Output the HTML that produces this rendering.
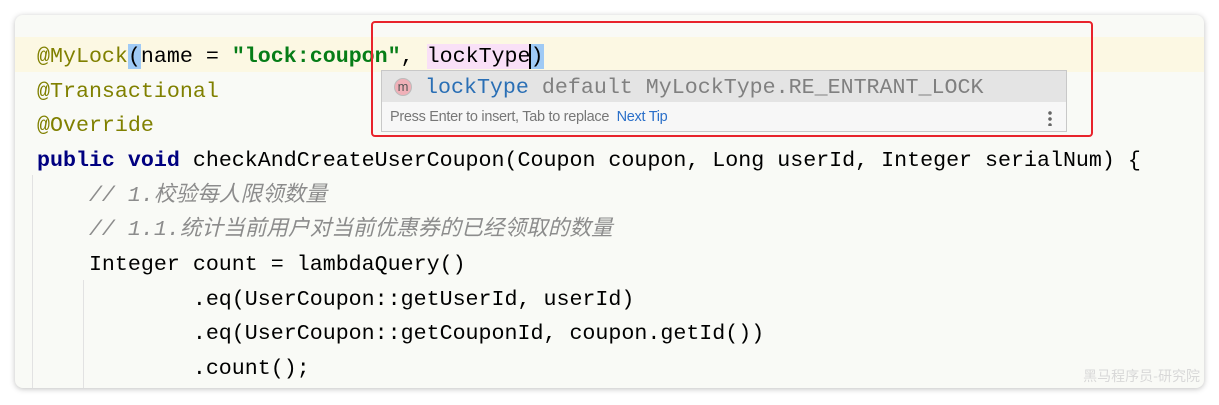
<!DOCTYPE html>
<html><head><meta charset="utf-8"><style>
body{margin:0;width:1219px;height:405px;background:#fff;overflow:hidden;position:relative}
.card{position:absolute;left:15px;top:15px;width:1189px;height:373px;background:#f9faf6;border-radius:8px;box-shadow:0 1px 6px rgba(0,0,0,.25);overflow:hidden}
.hl{position:absolute;left:0;top:22px;width:100%;height:35px;background:#fcf8e3}
.ln{position:absolute;left:22px;font:21.65px/34px "Liberation Mono","Noto Sans CJK SC",monospace;white-space:pre;color:#000}
.an{color:#808000}.kw{color:#000080;font-weight:bold}.st{color:#067d17;font-weight:bold}.cm{color:#8c8c8c;font-style:italic}
.g{position:absolute;width:1px;background:#e2e2e2}
.pop{position:absolute;left:381px;top:70px;width:686px;height:62px;border:1px solid #c8c8c8;background:#f7f7f7;box-sizing:border-box}
.row{height:31px;background:#e4e4e4;font:21.65px/33px "Liberation Mono",monospace;color:#808080;white-space:pre;position:relative}
.red{position:absolute;left:371px;top:21px;width:722px;height:116px;border:2px solid #e8232b;border-radius:4px;box-sizing:border-box}
</style></head><body>
<div class="card">
<div class="hl"></div>
<div class="g" style="left:17px;top:160px;height:213px"></div>
<div class="g" style="left:68px;top:265px;height:108px"></div>
<div class="ln" style="top:25px"><span class="an">@MyLock</span><span style="background:#9fcaf5">(</span>name = <span class="st">"lock:coupon"</span>, <span style="background:#f9e0f7">lockType</span><span style="background:#9fcaf5;border-left:2px solid #000;margin-left:-2px">)</span></div>
<div class="ln an" style="top:60px">@Transactional</div>
<div class="ln an" style="top:94px">@Override</div>
<div class="ln" style="top:129px"><span class="kw">public void</span> checkAndCreateUserCoupon(Coupon coupon, Long userId, Integer serialNum) {</div>
<div class="ln cm" style="top:164px">    // 1.校验每人限领数量</div>
<div class="ln cm" style="top:198px">    // 1.1.统计当前用户对当前优惠券的已经领取的数量</div>
<div class="ln" style="top:233px">    Integer count = lambdaQuery()</div>
<div class="ln" style="top:268px">            .eq(UserCoupon::getUserId, userId)</div>
<div class="ln" style="top:302px">            .eq(UserCoupon::getCouponId, coupon.getId())</div>
<div class="ln" style="top:337px">            .count();</div>
<div style="position:absolute;right:4px;bottom:2px;font:14px 'Noto Sans CJK SC',sans-serif;color:#d8d8d8">黑马程序员-研究院</div>
</div>
<div class="pop">
<div class="row"><span style="position:absolute;left:12px;top:7px;width:18px;height:18px;border-radius:9px;background:#f0b0b8;border:1px solid #bbb;box-sizing:border-box;font:13px/16px 'Liberation Sans',sans-serif;text-align:center;color:#555">m</span><span style="position:absolute;left:43px"><span style="color:#2a6fb5">lockType</span> default MyLockType.RE_ENTRANT_LOCK</span></div>
<div style="font:14.5px/31px 'Liberation Sans',sans-serif;color:#777;padding-left:8px;position:relative;letter-spacing:-0.3px">Press Enter to insert, Tab to replace &nbsp;<span style="color:#2a6fc9">Next Tip</span><span style="position:absolute;right:14px;top:8px;width:4px;height:16px;background:radial-gradient(circle,#666 1.6px,transparent 2px) 0 0/4px 6px"></span></div>
</div>
<div class="red"></div>
</body></html>
